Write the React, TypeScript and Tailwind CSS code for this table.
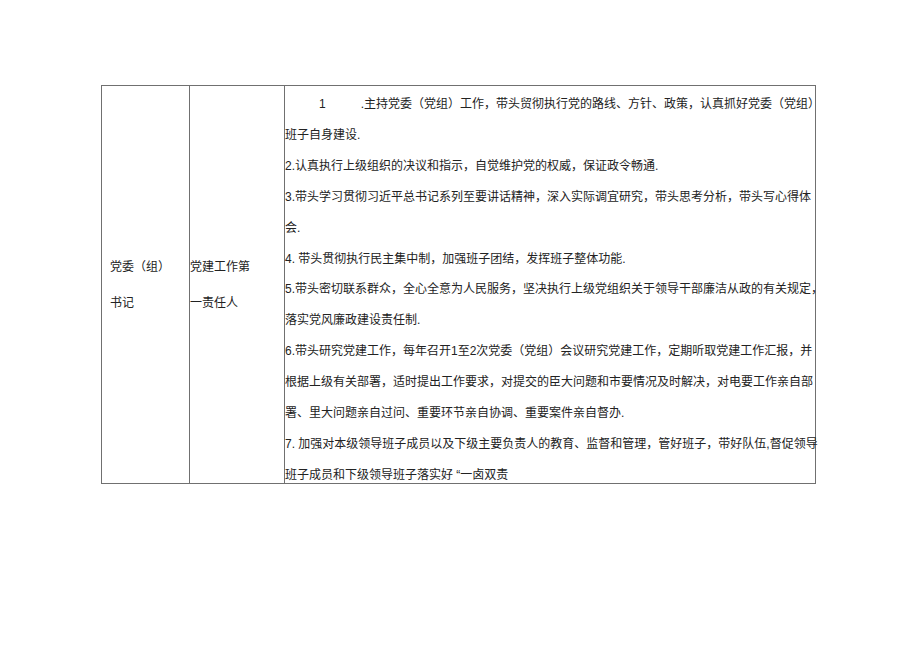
const duties: React.ReactNode[] = [
  <>
    <span className="pl-[34px]">1</span>
    <span className="pl-[35px]">.主持党委（党组）工作，带头贸彻执行党的路线、方针、政策，认真抓好党委（党组）</span>
  </>,
  '班子自身建设.',
  '2.认真执行上级组织的决议和指示，自觉维护党的权威，保证政令畅通.',
  '3.带头学习贯彻习近平总书记系列至要讲话精神，深入实际调宜研究，带头思考分析，带头写心得体',
  '会.',
  '4. 带头贯彻执行民主集中制，加强班子团结，发挥班子整体功能.',
  '5.带头密切联系群众，全心全意为人民服务，坚决执行上级党组织关于领导干部廉洁从政的有关规定，',
  '落实党风廉政建设责任制.',
  '6.带头研究党建工作，每年召开1至2次党委（党组）会议研究党建工作，定期听取党建工作汇报，并',
  '根据上级有关部署，适时提出工作要求，对提交的臣大问题和市要情况及时解决，对电要工作亲自部',
  '署、里大问题亲自过问、重要环节亲自协调、重要案件亲自督办.',
  '7. 加强对本级领导班子成员以及下级主要负责人的教育、监督和管理，管好班子，带好队伍,督促领导',
  '班子成员和下级领导班子落实好 “一卤双责',
]

export default function App() {
  return (
    <div className="w-[920px] h-[651px] bg-white pt-[85px] pl-[101px] text-[12px] text-[#222] font-['Liberation_Sans','Noto_Sans_CJK_SC',sans-serif]">
      <div className="w-[715px] h-[399px] border border-[#707070] grid grid-cols-[88px_95px_530px] grid-rows-[minmax(0,1fr)]">
        <div className="border-r border-[#707070] flex flex-col justify-center pl-[8px] leading-[36px]">
          <div>党委（组）</div>
          <div>书记</div>
        </div>
        <div className="border-r border-[#707070] flex flex-col justify-center leading-[36px]">
          <div>党建工作第</div>
          <div>一责任人</div>
        </div>
        <div className="pt-[3px] leading-[30.9px]">
          {duties.map((line, i) => (
            <div key={i} className="whitespace-nowrap">
              {line}
            </div>
          ))}
        </div>
      </div>
    </div>
  )
}
